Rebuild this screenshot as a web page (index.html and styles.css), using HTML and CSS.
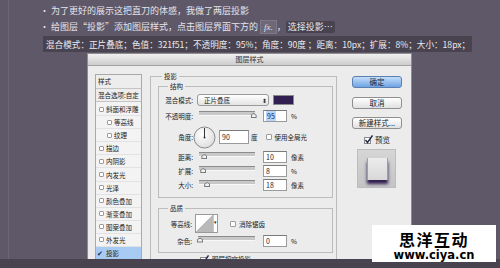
FILE: index.html
```html
<!DOCTYPE html>
<html lang="zh">

<head>
    <meta charset="UTF-8">
    <meta name="viewport" content="width=device-width, initial-scale=1.0">
    <title>图层样式 - 投影</title>
    <link rel="stylesheet" href="styles.css">
</head>

<body>

    <div class="page">
        <div class="notes">
            <p class="note">· 为了更好的展示这把直刀的体感，我做了两层投影</p>
            <p class="note">· 给图层“投影”添加图层样式，点击图层界面下方的 <span class="fx">fx.</span>，<span class="mark">选择投影…</span></p>
            <p class="params">混合模式：正片叠底；色值：321f51；不透明度：95%；角度：90度 ；距离：10px；扩展：8%；大小：18px；</p>
        </div>

        <div class="dialog">
            <div class="titlebar">图层样式</div>
            <div class="dialog-body">

                <div class="style-list">
                    <div class="list-head">样式</div>
                    <div class="list-head">混合选项:自定</div>
                    <div class="list-items">
                        <div class="item"><span class="box"></span>斜面和浮雕</div>
                        <div class="item sub"><span class="box"></span>等高线</div>
                        <div class="item sub"><span class="box"></span>纹理</div>
                        <div class="item"><span class="box"></span>描边</div>
                        <div class="item"><span class="box"></span>内阴影</div>
                        <div class="item"><span class="box"></span>内发光</div>
                        <div class="item"><span class="box"></span>光泽</div>
                        <div class="item"><span class="box"></span>颜色叠加</div>
                        <div class="item"><span class="box"></span>渐变叠加</div>
                        <div class="item"><span class="box"></span>图案叠加</div>
                        <div class="item"><span class="box"></span>外发光</div>
                        <div class="item selected"><span class="tick">✔</span>投影</div>
                    </div>
                </div>

                <div class="panel">
                    <fieldset class="group outer">
                        <legend>投影</legend>

                        <fieldset class="group structure">
                            <legend>结构</legend>
                            <div class="row r-mode">
                                <span class="label">混合模式:</span>
                                <span class="select">正片叠底<span class="arrows">⬍</span></span>
                                <span class="swatch"></span>
                            </div>
                            <div class="row r-opacity">
                                <span class="label">不透明度:</span>
                                <span class="slider"><span class="thumb" style="left: 94%"></span></span>
                                <span class="field"><span class="sel">95</span></span>
                                <span class="unit">%</span>
                            </div>
                            <div class="row r-angle">
                                <span class="label">角度:</span>
                                <svg class="dial" width="23" height="23" viewBox="0 0 23 23">
                                    <defs>
                                        <radialGradient id="dialfill" cx="40%" cy="35%" r="70%">
                                            <stop offset="0" stop-color="#ffffff" />
                                            <stop offset="1" stop-color="#dcdcdc" />
                                        </radialGradient>
                                    </defs>
                                    <circle cx="11.5" cy="11.5" r="10.5" fill="url(#dialfill)" stroke="#8a8a8a" />
                                    <line x1="11.5" y1="11.5" x2="11.5" y2="2" stroke="#333" stroke-width="1" />
                                    <circle cx="11.5" cy="11.5" r="1" fill="#333" />
                                </svg>
                                <span class="field wide">90</span>
                                <span class="unit">度</span>
                                <span class="box gap"></span>
                                <span class="text">使用全局光</span>
                            </div>
                            <div class="row r-dist">
                                <span class="label">距离:</span>
                                <span class="slider"><span class="thumb" style="left: 6%"></span></span>
                                <span class="field">10</span>
                                <span class="unit">像素</span>
                            </div>
                            <div class="row r-spread">
                                <span class="label">扩展:</span>
                                <span class="slider"><span class="thumb" style="left: 4%"></span></span>
                                <span class="field">8</span>
                                <span class="unit">%</span>
                            </div>
                            <div class="row r-size">
                                <span class="label">大小:</span>
                                <span class="slider"><span class="thumb" style="left: 11%"></span></span>
                                <span class="field">18</span>
                                <span class="unit">像素</span>
                            </div>
                        </fieldset>

                        <fieldset class="group quality">
                            <legend>品质</legend>
                            <div class="row r-contour">
                                <span class="label">等高线:</span>
                                <span class="contour"><span class="curve"></span><span class="drop">▾</span></span>
                                <span class="box gap"></span>
                                <span class="text">消除锯齿</span>
                            </div>
                            <div class="row r-noise">
                                <span class="label">杂色:</span>
                                <span class="slider"><span class="thumb" style="left: 0%"></span></span>
                                <span class="field">0</span>
                                <span class="unit">%</span>
                            </div>
                        </fieldset>

                        <div class="knockout">
                            <svg class="checked" width="9" height="9" viewBox="0 0 9 9">
                                <rect x="0.5" y="2.5" width="6" height="6" fill="#fff" stroke="#8a8a8a" />
                                <path d="M1.5 5 L3.5 7.5 L8.5 0.5" fill="none" stroke="#1d2a4a" stroke-width="1.4" />
                            </svg>
                            <span class="text">图层挖空投影</span>
                        </div>
                    </fieldset>
                </div>

                <div class="actions">
                    <div class="btn primary">确定</div>
                    <div class="btn">取消</div>
                    <div class="btn">新建样式...</div>
                    <div class="preview-toggle">
                        <svg class="checked" width="9" height="9" viewBox="0 0 9 9">
                            <rect x="0.5" y="2.5" width="6" height="6" fill="#fff" stroke="#8a8a8a" />
                            <path d="M1.5 5 L3.5 7.5 L8.5 0.5" fill="none" stroke="#1d2a4a" stroke-width="1.4" />
                        </svg>
                        <span>预览</span>
                    </div>
                    <div class="preview">
                        <div class="preview-square"></div>
                    </div>
                </div>

            </div>
        </div>
    </div>

    <div class="bottom-bar"></div>

    <div class="watermark">
        <div class="wm-name">思洋互动</div>
        <div class="wm-url">www.ciya.cn</div>
    </div>

</body>

</html>
```

FILE: styles.css
```css
* {
    box-sizing: border-box;
}

body {
    margin: 0;
    width: 500px;
    height: 268px;
    overflow: hidden;
    background-color: #5e5868;
    font-family: "Noto Sans CJK SC", sans-serif;
    position: relative;
}

.page {
    height: 259px;
    margin-left: 8px;
    border-left: 1px solid #6b6575;
    overflow: hidden;
}

/* notes above the dialog */

.notes {
    padding: 3px 0 0 31px;
}

.note {
    margin: 0;
    height: 16px;
    line-height: 16px;
    font-size: 9px;
    color: #e6e3ea;
    white-space: nowrap;
}

.fx {
    display: inline-block;
    padding: 0 3px;
    line-height: 12px;
    background-color: #6e6879;
    border: 1px solid #7d7787;
    font-style: italic;
    font-family: "Liberation Serif", serif;
}

.mark {
    display: inline-block;
    padding: 0 2px;
    line-height: 12px;
    background-color: #48434f;
    border-radius: 2px;
}

.params {
    margin: 1px 0 0 3px;
    width: 429px;
    height: 16px;
    line-height: 16px;
    padding-left: 3px;
    font-size: 8.6px;
    color: #ebe9ee;
    background-color: #48434f;
    white-space: nowrap;
}

/* dialog */

.dialog {
    margin: 1px 0 0 78px;
    width: 325px;
    height: 206px;
    background-color: #ececec;
    border: 1px solid #8d8d8d;
    border-bottom: none;
    overflow: hidden;
    font-size: 6.5px;
    color: #222;
}

.titlebar {
    height: 12px;
    line-height: 11px;
    text-align: center;
    font-size: 7px;
    color: #333;
    background: linear-gradient(#f0f0f0, #cdcdcd);
    border-bottom: 1px solid #a2a2a2;
}

.dialog-body {
    display: flex;
    align-items: flex-start;
    padding: 8px 0 0 7px;
}

/* style list */

.style-list {
    width: 47px;
    height: 200px;
    margin-right: 8px;
    background-color: #f3f3f3;
    border: 1px solid #a9a9a9;
}

.list-head {
    height: 13.5px;
    line-height: 12.5px;
    padding-left: 2px;
    border-bottom: 1px solid #c4c4c4;
    background-color: #ededed;
    white-space: nowrap;
}

.list-items {
    padding-top: 1px;
}

.item {
    display: flex;
    align-items: center;
    height: 13.1px;
    padding-left: 3px;
    border-bottom: 1px solid #e2e2e2;
    white-space: nowrap;
}

.item.sub {
    padding-left: 11px;
}

.item .box {
    width: 5px;
    height: 5px;
    margin-right: 2px;
}

.item.selected {
    background-color: #a7cbf3;
    padding-left: 1px;
}

.tick {
    width: 9px;
    font-size: 7px;
    color: #1b2a4d;
}

.box {
    display: inline-block;
    width: 6px;
    height: 6px;
    background-color: #fff;
    border: 1px solid #9c9c9c;
    border-radius: 1px;
    flex-shrink: 0;
}

/* main panel */

.panel {
    width: 187px;
    margin: -2px 15px 0 0;
}

.group {
    margin: 0;
    padding: 0;
    border: 1px solid #bcbcbc;
    min-width: 0;
}

.group legend {
    padding: 0 2px;
    line-height: 8px;
    font-size: 6.5px;
}

.outer {
    padding: 2px 3px 0 7px;
    height: 200px;
}

.outer > legend {
    margin-left: 4px;
}

.structure,
.quality {
    padding: 4px 0 6px 0;
}

.structure > legend,
.quality > legend {
    margin-left: 9px;
}

.quality {
    margin-top: 6px;
    padding: 2px 0 5px 0;
}

.row {
    display: flex;
    align-items: center;
    height: 12px;
    white-space: nowrap;
}

.label {
    width: 34px;
    text-align: right;
    flex-shrink: 0;
}

.r-opacity,
.r-angle {
    margin-top: 4px;
}

.r-angle {
    height: 22px;
}

.r-dist {
    margin-top: 3px;
}

.r-spread,
.r-size {
    margin-top: 2px;
}

.select {
    display: flex;
    align-items: center;
    justify-content: space-between;
    width: 72px;
    height: 12px;
    margin-left: 4px;
    padding: 0 1px 0 6px;
    background: linear-gradient(#ffffff, #e4e4e4);
    border: 1px solid #9a9a9a;
    border-radius: 3px;
}

.arrows {
    font-size: 6px;
    color: #333;
}

.swatch {
    width: 21px;
    height: 10px;
    margin-left: 4px;
    background-color: #321f51;
    border: 1px solid #8a8a8a;
}

.slider {
    position: relative;
    width: 56px;
    height: 12px;
    margin-left: 6px;
    flex-shrink: 0;
}

.slider::before {
    content: "";
    position: absolute;
    left: 0;
    right: 0;
    top: 1px;
    height: 3px;
    background-color: #c8c8c8;
    border-top: 1px solid #8c8c8c;
    border-bottom: 1px solid #f8f8f8;
}

.thumb {
    position: absolute;
    top: 3px;
    width: 6px;
    height: 5px;
    margin-left: -1px;
    background-color: #7a7a7a;
    clip-path: polygon(0 100%, 0 40%, 50% 0, 100% 40%, 100% 100%);
}

.thumb::after {
    content: "";
    position: absolute;
    inset: 1px;
    background-color: #f2f2f2;
    clip-path: polygon(0 100%, 0 40%, 50% 0, 100% 40%, 100% 100%);
}

.field {
    display: flex;
    align-items: center;
    width: 24px;
    height: 12px;
    margin-left: 8px;
    padding-left: 2px;
    background-color: #fff;
    border: 1px solid #9a9a9a;
    border-top-color: #7a7a7a;
    font-size: 7px;
    flex-shrink: 0;
}

.field.wide {
    width: 30px;
    height: 14px;
    margin-left: 3px;
}

.sel {
    background-color: #b5d5fc;
    padding: 0 1px;
}

.unit {
    margin-left: 4px;
}

.r-angle .unit {
    margin-left: 2px;
}

.box.gap {
    margin-left: 8px;
}

.text {
    margin-left: 3px;
}

.quality .label {
    width: 33px;
}

.r-contour {
    height: 19px;
}

.r-noise {
    margin-top: 1px;
    height: 13px;
}

.contour {
    display: flex;
    width: 23px;
    height: 19px;
    margin-left: 3px;
    background-color: #fff;
    border: 1px solid #9a9a9a;
}

.curve {
    width: 18px;
    background: linear-gradient(to top left, #b9b9b9 50%, #ffffff 50%);
    border-right: 1px solid #c8c8c8;
}

.drop {
    font-size: 5px;
    line-height: 14px;
    padding-left: 0.5px;
}

.r-contour .box.gap {
    margin-left: 12px;
}

.r-noise .slider {
    width: 57px;
}

.knockout {
    display: flex;
    align-items: center;
    margin: 1px 0 0 42px;
    height: 10px;
}

/* buttons on the right */

.actions {
    width: 50px;
    margin-top: 2px;
}

.btn {
    height: 12px;
    line-height: 10px;
    text-align: center;
    font-size: 7.5px;
    background: linear-gradient(#ffffff, #e1e1e1);
    border: 1px solid #8f8f8f;
    border-radius: 3px;
    margin-bottom: 8.5px;
}

.btn.primary {
    background: linear-gradient(#c4def9, #6fa3e3);
    border-color: #5a7fb2;
    color: #1a2740;
}

.preview-toggle {
    display: flex;
    align-items: center;
    justify-content: center;
    gap: 2px;
    height: 10px;
    margin-top: -3px;
    font-size: 7.5px;
}

.preview {
    width: 39px;
    height: 39px;
    margin: 4px 0 0 5px;
    padding: 8px 0 0 9px;
    background: linear-gradient(#d6d6d6, #c4c4c4);
    border: 1px solid #bdbdbd;
}

.preview-square {
    width: 21px;
    height: 22px;
    background: linear-gradient(#ececec, #d8d8d8);
    border-left: 1px solid #9f9f9f;
    border-right: 1px solid #9f9f9f;
    box-shadow: 0 4px 3px #321f51;
}

.bottom-bar {
    height: 9px;
    background-color: #48434f;
}

/* watermark overlay */

.watermark {
    position: absolute;
    left: 372px;
    top: 225px;
    width: 124px;
    height: 37px;
    background-color: #fff;
    text-align: center;
    color: #000;
}

.wm-name {
    font-size: 16px;
    font-weight: bold;
    line-height: 16px;
    margin-top: 6px;
    letter-spacing: 1.5px;
}

.wm-url {
    font-family: "DejaVu Sans", sans-serif;
    font-size: 11.5px;
    font-weight: bold;
    line-height: 12px;
    margin-top: 2px;
}
```
